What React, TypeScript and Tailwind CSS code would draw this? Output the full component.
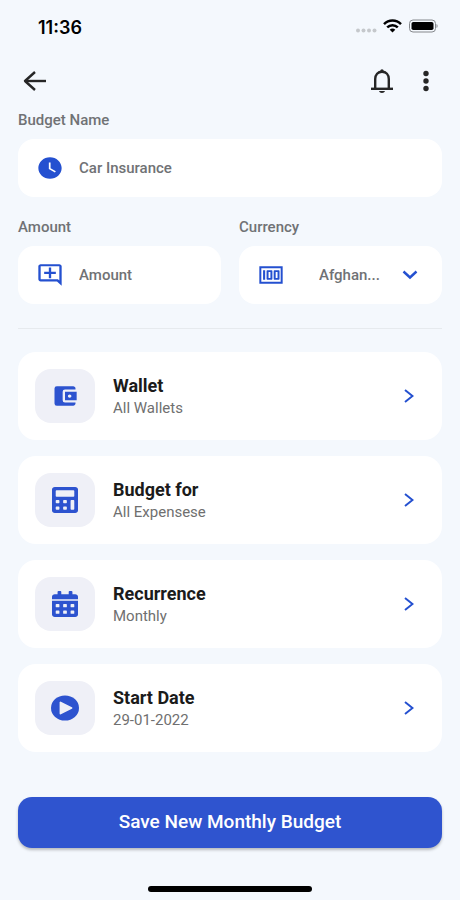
import React from "react";
import { FaCalculator, FaCalendarAlt } from "react-icons/fa";
import {
  MdAccountBalanceWallet,
  MdOutlineAddComment,
  MdWatchLater,
} from "react-icons/md";

const StatusBar = () => (
  <div className="flex h-14 items-center justify-between pl-5 pr-1">
    <span className="font-['Inter','Liberation_Sans',sans-serif] text-lg font-semibold text-black">
      11:36
    </span>
    <div className="flex items-center gap-1.5 pb-1">
      <svg width="22" height="16" viewBox="0 0 22 16" fill="#c5c8cc" aria-hidden="true">
        <circle cx="3" cy="12.5" r="2" />
        <circle cx="8.5" cy="12.5" r="2" />
        <circle cx="14" cy="12.5" r="2" />
        <circle cx="19.5" cy="12.5" r="2" />
      </svg>
      <svg width="19" height="14" viewBox="0 0 19 14" fill="none" stroke="#000" strokeWidth="2.5" aria-hidden="true">
        <path d="M1 5.2c4.8-4.8 12.2-4.8 17 0" />
        <path d="M4.2 8.4c3-3 7.6-3 10.6 0" />
        <path d="M9.5 13.4 6.7 10.7c1.6-1.5 4-1.5 5.6 0z" fill="#000" stroke="none" />
      </svg>
      <svg width="30" height="14" viewBox="0 0 30 14" aria-hidden="true">
        <rect x="1.5" y="1" width="26" height="12" rx="3.5" fill="none" stroke="#85888c" />
        <rect x="3.5" y="3" width="22" height="8" rx="1.8" fill="#000" />
        <path d="M28.5 5c1.5.6 1.5 3.4 0 4z" fill="#85888c" />
      </svg>
    </div>
  </div>
);

const TopBar = () => (
  <header className="flex h-[50px] items-center justify-between px-1">
    <button type="button" aria-label="Back" className="cursor-pointer">
      <svg width="26" height="22" viewBox="0 0 26 22" fill="none" stroke="#262626" strokeWidth="2.4">
        <path d="M24 11H3" />
        <path d="M13 2 3 11l10 9" strokeLinejoin="round" />
      </svg>
    </button>
    <div className="flex items-center gap-5">
      <button type="button" aria-label="Notifications" className="cursor-pointer">
        <svg width="24" height="26" viewBox="0 0 24 26" fill="none" stroke="#262626" strokeWidth="2.4">
          <path d="M5.2 20.5V11c0-4.4 2.7-7.3 6.8-7.3s6.8 2.9 6.8 7.3v9.5" />
          <path d="M1 20.8h22" />
          <path d="M10.2 3.5c0-3 3.6-3 3.6 0zM9 23h6c-.6 2.6-5.4 2.6-6 0z" fill="#262626" stroke="none" />
        </svg>
      </button>
      <button type="button" aria-label="More options" className="cursor-pointer px-2">
        <svg width="8" height="22" viewBox="0 0 8 22" fill="#262626">
          <circle cx="4" cy="3.5" r="2.7" />
          <circle cx="4" cy="11" r="2.7" />
          <circle cx="4" cy="18.5" r="2.7" />
        </svg>
      </button>
    </div>
  </header>
);

const MoneyIcon = () => (
  <svg width="28" height="26" viewBox="0 0 24 24" preserveAspectRatio="none" fill="currentColor" fillRule="evenodd" aria-hidden="true">
    <path d="M2 4h20v16H2zM3.7 5.7v12.6h16.6V5.7z" />
    <path d="M5.2 7.6H7v8.8H5.2z" />
    <path d="M8.7 7.6h4l.5.5v7.8l-.5.5h-4l-.5-.5V8.1zM9.9 9.3v5.4h1.6V9.3z" />
    <path d="M14.8 7.6h4l.5.5v7.8l-.5.5h-4l-.5-.5V8.1zM16 9.3v5.4h1.6V9.3z" />
  </svg>
);

const PlayIcon = () => (
  <svg width="28" height="26" viewBox="0 0 28 26" fill="currentColor" aria-hidden="true">
    <ellipse cx="14" cy="13" rx="14" ry="12.6" />
    <path d="M9.5 7.5v11l11-5.5z" fill="#eff0f7" stroke="#eff0f7" strokeWidth="1.8" strokeLinejoin="round" />
  </svg>
);

interface OptionCardProps {
  icon: React.ReactNode;
  title: string;
  value: string;
}

const OptionCard: React.FC<OptionCardProps> = ({ icon, title, value }) => (
  <button
    type="button"
    className="flex w-full cursor-pointer items-center rounded-[18px] bg-white p-[17px] text-left"
  >
    <span className="flex h-[54px] w-15 items-center justify-center rounded-2xl bg-[#eff0f7] text-[#2d53cf]">
      {icon}
    </span>
    <span className="ml-[18px] flex flex-1 flex-col">
      <span className="text-lg/6 font-bold text-[#1b1b1b]">{title}</span>
      <span className="text-[15px]/5 text-[#6f6f6f]">{value}</span>
    </span>
    <svg width="10" height="16" viewBox="0 0 10 16" fill="none" stroke="#2450d0" strokeWidth="2" className="mr-[11px]" aria-hidden="true">
      <path d="m1 2 7.5 6L1 14" />
    </svg>
  </button>
);

const labelClass = "block text-[15px]/5 font-medium text-[#707275]";
const fieldClass = "mt-[9px] flex items-center rounded-2xl bg-white pl-[18px] text-[#2450d0]";
const inputClass =
  "h-[58px] w-full min-w-0 bg-transparent pl-[15px] text-[15px] font-medium text-[#707275] outline-none placeholder:text-[#707275]";

export default function App() {
  return (
    <div className="flex min-h-screen flex-col bg-[#f4f8fd] px-[18px] font-['Roboto','Liberation_Sans',sans-serif]">
      <StatusBar />
      <TopBar />

      <form className="flex flex-1 flex-col pt-1" onSubmit={(e) => e.preventDefault()}>
        <label htmlFor="name" className={labelClass}>
          Budget Name
        </label>
        <div className={fieldClass}>
          <MdWatchLater preserveAspectRatio="none" className="h-[26px] w-7 shrink-0" />
          <input id="name" defaultValue="Car Insurance" className={inputClass} />
        </div>

        <div className="mt-5 grid grid-cols-2 gap-[18px]">
          <div>
            <label htmlFor="amount" className={labelClass}>
              Amount
            </label>
            <div className={fieldClass}>
              <MdOutlineAddComment preserveAspectRatio="none" className="h-[26px] w-7 shrink-0" />
              <input id="amount" placeholder="Amount" className={inputClass} />
            </div>
          </div>
          <div>
            <label htmlFor="currency" className={labelClass}>
              Currency
            </label>
            <div className={`${fieldClass} relative`}>
              <span className="pointer-events-none shrink-0">
                <MoneyIcon />
              </span>
              <select
                id="currency"
                className="h-[58px] w-full min-w-0 cursor-pointer appearance-none bg-transparent pl-[34px] text-[15px] font-medium text-[#707275] outline-none"
              >
                <option>Afghan...</option>
              </select>
              <svg
                width="16"
                height="10"
                viewBox="0 0 16 10"
                fill="none"
                stroke="currentColor"
                strokeWidth="2.4"
                className="pointer-events-none absolute right-6"
                aria-hidden="true"
              >
                <path d="m1.5 1.5 6.5 6 6.5-6" />
              </svg>
            </div>
          </div>
        </div>

        <hr className="mb-[23px] mt-6 border-[#e6eaee]" />

        {/* Budget options */}
        <div className="flex flex-col gap-4">
          <OptionCard
            icon={<MdAccountBalanceWallet preserveAspectRatio="none" className="h-[26px] w-7" />}
            title="Wallet"
            value="All Wallets"
          />
          <OptionCard
            icon={<FaCalculator preserveAspectRatio="none" className="size-[26px]" />}
            title="Budget for"
            value="All Expensese"
          />
          <OptionCard
            icon={<FaCalendarAlt preserveAspectRatio="none" className="size-[26px]" />}
            title="Recurrence"
            value="Monthly"
          />
          <OptionCard icon={<PlayIcon />} title="Start Date" value="29-01-2022" />
        </div>

        <button
          type="submit"
          className="mt-[45px] h-[51px] w-full cursor-pointer rounded-[14px] bg-[#2f54cf] text-[19px] font-medium text-white shadow-[0_2px_3px_rgba(0,0,0,0.25)]"
        >
          Save New Monthly Budget
        </button>
      </form>

      <div className="mx-auto mb-2 h-1.5 w-41 rounded-full bg-black" />
    </div>
  );
}
